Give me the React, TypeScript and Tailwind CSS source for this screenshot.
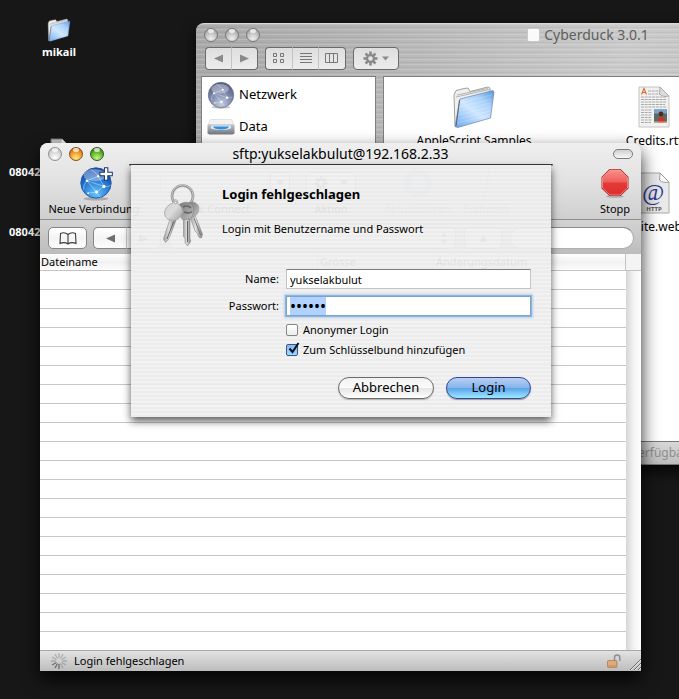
import React, { useEffect, useRef, useState } from "react";
import { clsx } from "clsx";

/* ------------------------------------------------------------------ */
/* Icons                                                               */
/* ------------------------------------------------------------------ */

function FolderIcon({ id, className }: { id: string; className?: string }) {
  return (
    <svg viewBox="0 0 44 44" className={className} aria-hidden="true">
      <defs>
        <linearGradient id={id} x1="0.1" y1="1" x2="0.9" y2="0">
          <stop offset="0" stopColor="#6fb0f5" />
          <stop offset="0.45" stopColor="#cfe6ff" />
          <stop offset="0.75" stopColor="#a8d0fa" />
          <stop offset="1" stopColor="#5f9fe2" />
        </linearGradient>
      </defs>
      <path d="M3 41 L2 10 L4 5.5 L12 3.5 L16 3 L18 6.5 L36 2 L38 3 L38 32 L6 42 Z" fill="#efefef" stroke="#8a8a8a" strokeWidth="0.8" />
      <path d="M4 12 L37 4.5 M5 10 L36 3.5" stroke="#a5a5a5" strokeWidth="0.8" fill="none" />
      <path d="M8 14 L41 5.5 L42 7 L38.5 33 L5.5 42.5 L3 41.5 Z" fill={`url(#${id})`} stroke="#6b86a8" strokeWidth="0.7" />
      <path d="M4 41.5 L7.5 15" stroke="#666" strokeWidth="1" fill="none" />
      <path d="M8 18 L40 10 M7.5 22 L39.5 14 M7 26 L39 18 M6.5 30 L38.5 22 M6 34 L38 26 M5.5 38 L37.5 30" stroke="#fff" strokeOpacity="0.25" strokeWidth="0.8" />
    </svg>
  );
}

function GlobeIcon({ id, gray, plus, className }: { id: string; gray?: boolean; plus?: boolean; className?: string }) {
  return (
    <svg viewBox="0 0 32 32" className={className} aria-hidden="true">
      <defs>
        <radialGradient id={id} cx="0.5" cy="0.85" r="0.85">
          <stop offset="0" stopColor={gray ? "#c5cde0" : "#67c3f7"} />
          <stop offset="0.5" stopColor={gray ? "#7f8bb0" : "#2a7fd6"} />
          <stop offset="1" stopColor={gray ? "#4e587c" : "#0c3f9c"} />
        </radialGradient>
      </defs>
      <ellipse cx="16" cy="30" rx="11" ry="1.6" fill="#000" opacity="0.22" />
      <circle cx="16" cy="16" r={gray ? 14.5 : 13.5} fill={`url(#${id})`} stroke={gray ? "#6b7088" : "#1d54a8"} strokeWidth="0.8" />
      <ellipse cx="15" cy="9" rx="10" ry="5.5" fill="#fff" opacity="0.35" />
      <g stroke="#e8f4ff" strokeWidth="0.5" fill="none" opacity="0.8">
        <path d="M8 14 L18 10 L23 19 L16.5 24 L8 14 M8 14 Q4 18 5 22 M16.5 24 Q19 28 20 29 M23 19 Q27 20 29 18 M18 10 Q15 5 11 4 M9 25 L16.5 24 M8 14 L23 19" />
      </g>
      <g fill="#fff">
        <circle cx="8" cy="14" r="1.2" />
        <circle cx="18" cy="10" r="1.1" />
        <circle cx="23" cy="19" r="1.4" />
        <circle cx="16.5" cy="24" r="1.3" />
        <circle cx="9" cy="25" r="0.8" />
      </g>
      {plus && (
        <path d="M23.5 2.5 h3 v4 h4 v3 h-4 v4 h-3 v-4 h-4 v-3 h4 Z" fill="#fff" stroke="#17376e" strokeWidth="0.9" />
      )}
    </svg>
  );
}

function DriveIcon() {
  return (
    <svg viewBox="0 0 28 18" className="h-[18px] w-7" aria-hidden="true">
      <defs>
        <linearGradient id="driveFront" x1="0" y1="0" x2="0" y2="1">
          <stop offset="0" stopColor="#c2c4c8" />
          <stop offset="1" stopColor="#777a80" />
        </linearGradient>
      </defs>
      <path d="M3.500 1.500 h21 l2.500 5 h-26 Z" fill="#f2f2f2" stroke="#d3d3d3" strokeWidth="0.6" />
      <rect x="0.500" y="6.500" width="27" height="9.500" rx="0.800" fill="url(#driveFront)" />
      <path d="M4 7.500 h20 v3 q-10 3 -20 0 Z" fill="#dbe9f7" />
      <path d="M6 8.500 h16 q-1 3 -8 3 q-7 0 -8 -3" fill="#318fe0" />
      <path d="M2 16.500 h24" stroke="#555" strokeOpacity="0.4" />
    </svg>
  );
}

function GearIcon({ className }: { className?: string }) {
  return (
    <svg viewBox="0 0 16 16" className={className} aria-hidden="true">
      <g fill="currentColor">
        {[0, 45, 90, 135, 180, 225, 270, 315].map((angle) => (
          <rect key={angle} x="6.600" y="0.500" width="2.800" height="4" transform={`rotate(${angle} 8 8)`} />
        ))}
      </g>
      <circle cx="8" cy="8" r="3.700" fill="none" stroke="currentColor" strokeWidth="2.400" />
    </svg>
  );
}

function Triangle({ dir, className }: { dir: "left" | "right" | "up" | "down"; className?: string }) {
  const points = {
    left: "10,0.5 10,9.5 0,5",
    right: "0,0.5 0,9.5 10,5",
    up: "1,9 9,9 5,1",
    down: "0,2 10,2 5,8",
  };
  return (
    <svg viewBox="0 0 10 10" className={className} aria-hidden="true">
      <polygon points={points[dir]} fill="currentColor" />
    </svg>
  );
}

function DocumentIcon() {
  return (
    <svg viewBox="0 0 34 44" className="h-11 w-[34px]" aria-hidden="true">
      <path d="M2 2 H23 L32 11 V42 H2 Z" fill="#f1f1f1" stroke="#c4c4c4" />
      <path d="M4 12 H29 M4 14.500 H29 M4 17 H29 M4 19.500 H28 M4 22 H29 M11 6 H22 M11 9 H23 M4 25 H15 M4 27.500 H15 M4 30 H15 M4 32.500 H14 M4 35 H15 M4 37.500 H14" stroke="#a9a9a9" strokeWidth="1" strokeDasharray="3 0.700" />
      <path d="M4.500 9.500 L7 3.500 L9.500 9.500 M5.500 7.500 H8.500" stroke="#d9692a" strokeWidth="1.100" fill="none" />
      <rect x="17" y="24.500" width="13" height="13" fill="#5c6a63" />
      <rect x="17" y="24.500" width="13" height="4" fill="#7ba3cf" />
      <circle cx="24" cy="29" r="2.400" fill="#4b2d20" />
      <path d="M21 37.500 q0 -6 3 -6 q3.500 0 3.500 6" fill="#c9332c" />
      <path d="M17 37 h13" stroke="#d7b08a" />
      <path d="M23 2 L22.500 9 Q26 12.500 32 11 Z" fill="#dcdcdc" stroke="#9d9d9d" strokeWidth="0.800" />
    </svg>
  );
}

function WeblocIcon() {
  return (
    <svg viewBox="0 0 34 44" className="h-11 w-[34px]" aria-hidden="true">
      <path d="M2 2 H23 L32 11 V42 H2 Z" fill="#e9e9e9" stroke="#a9a9a9" />
      <path d="M23 2 L22.500 9 Q26 12.500 32 11 Z" fill="#fafafa" stroke="#8d8d8d" strokeWidth="0.800" />
      <text x="16" y="28.500" textAnchor="middle" fontFamily="Liberation Serif, serif" fontSize="24" fontStyle="italic" fill="#2b3795">@</text>
      <text x="17" y="39.500" textAnchor="middle" fontFamily="Open Sans, sans-serif" fontSize="6" fontWeight="700" fill="#555">HTTP</text>
    </svg>
  );
}

function KeysIcon() {
  return (
    <svg viewBox="0 0 46 66" className="h-[66px] w-[46px]" aria-hidden="true">
      <defs>
        <linearGradient id="keyDisc" x1="0" y1="0" x2="1" y2="1">
          <stop offset="0" stopColor="#cfcfcf" />
          <stop offset="0.5" stopColor="#dcdcdc" />
          <stop offset="1" stopColor="#9c9c9c" />
        </linearGradient>
        <linearGradient id="keyBlade" x1="0" y1="0" x2="1" y2="0">
          <stop offset="0" stopColor="#a0a0a0" />
          <stop offset="0.45" stopColor="#dedede" />
          <stop offset="1" stopColor="#7d7d7d" />
        </linearGradient>
        <linearGradient id="keyHead" x1="0" y1="0" x2="1" y2="1">
          <stop offset="0" stopColor="#777" />
          <stop offset="0.6" stopColor="#a4a4a4" />
          <stop offset="1" stopColor="#c6c6c6" />
        </linearGradient>
      </defs>
      <circle cx="23.5" cy="15" r="10.500" fill="none" stroke="#949494" strokeWidth="2.600" />
      <circle cx="23.5" cy="14.700" r="10.700" fill="none" stroke="#cfcfcf" strokeWidth="0.900" />
      {/* right key */}
      <path d="M31 36 L36 34 L43.500 53 L42.500 57 L40 56.500 L38 52 L36 50 Z" fill="url(#keyBlade)" stroke="#868686" strokeWidth="0.500" />
      <path d="M35 37 L41.500 54" stroke="#6f6f6f" strokeWidth="0.900" />
      <path d="M29 22 Q36 19 39.500 25 Q41 32 35 36 L31 36 Z" fill="url(#keyHead)" stroke="#9a9a9a" strokeWidth="0.700" />
      {/* middle key */}
      <path d="M24.500 38 h6.500 v20 l0.700 2 l-1 2 l-2.200 3 l-2.500 -3.500 v-4 l-1.500 -2 Z" fill="url(#keyBlade)" stroke="#7c7c7c" strokeWidth="0.500" />
      <path d="M28.500 40 v21" stroke="#606060" strokeWidth="1" />
      <path d="M21 23 Q28 19 33.500 24 Q37 31 31.500 37.500 L24 39 Q18 33 21 23" fill="url(#keyHead)" stroke="#828282" strokeWidth="0.600" />
      <path d="M24 26 q5 -2.500 8 1 M25 31 q5 2 8 -0.500" stroke="#666" strokeWidth="1.600" fill="none" />
      {/* left key */}
      <path d="M11 38 L17 39 L11.500 54 L9 59 L6.500 61.500 L4.500 58 L6 53 Z" fill="url(#keyBlade)" stroke="#7c7c7c" strokeWidth="0.500" />
      <path d="M14.500 41 L8 58" stroke="#606060" strokeWidth="1" />
      <path d="M14 22 Q14 18.500 17 18.500 Q19.500 19.500 19 23 Q24 26 23.500 31 Q21.500 38 15 39.500 Q7 39.500 5.500 33 Q5.500 25 14 22 Z" fill="url(#keyDisc)" stroke="#a5a5a5" strokeWidth="0.800" />
      <circle cx="16.700" cy="21.500" r="1.300" fill="#f5f5f5" stroke="#8d8d8d" strokeWidth="0.700" />
    </svg>
  );
}

function StopIcon() {
  return (
    <svg viewBox="0 0 32 32" className="size-8" aria-hidden="true">
      <defs>
        <linearGradient id="stopRed" x1="0" y1="0" x2="0" y2="1">
          <stop offset="0" stopColor="#f98f8a" />
          <stop offset="0.48" stopColor="#ee5e5a" />
          <stop offset="0.52" stopColor="#e53a37" />
          <stop offset="1" stopColor="#dd2f2d" />
        </linearGradient>
      </defs>
      <ellipse cx="16" cy="29.500" rx="9" ry="1.500" fill="#000" opacity="0.200" />
      <path d="M10.500 2 H21.500 L29.500 10 V21.500 L21.500 29 H10.500 L2.500 21.500 V10 Z" fill="#a62423" />
      <path d="M11 3 H21 L28.500 10.500 V21 L21 28 H11 L3.500 21 V10.500 Z" fill="url(#stopRed)" stroke="#f8aaa6" strokeWidth="0.700" />
    </svg>
  );
}

function BookIcon() {
  return (
    <svg viewBox="0 0 18 13" className="h-[13px] w-[18px]" fill="none" stroke="#3c3c3c" strokeWidth="1.100" aria-hidden="true">
      <path d="M9 2.500 Q5.500 -0.500 1.500 1.500 L1 11.500 Q5.500 9.500 9 12 Q12.500 9.500 17 11.500 L16.500 1.500 Q12.500 -0.500 9 2.500 V12" />
    </svg>
  );
}

function SpinnerIcon() {
  return (
    <svg viewBox="0 0 16 16" className="size-4" aria-hidden="true">
      {Array.from({ length: 12 }, (_, i) => (
        <path
          key={i}
          d="M8 0.500 V4.500"
          stroke="#444"
          strokeWidth="1.300"
          strokeLinecap="round"
          opacity={i >= 6 && i <= 8 ? 0.7 : 0.28}
          transform={`rotate(${i * 30} 8 8)`}
        />
      ))}
    </svg>
  );
}

function PadlockIcon() {
  return (
    <svg viewBox="0 0 14 14" className="size-3.5" aria-hidden="true">
      <path d="M7.500 7 V3.500 Q7.500 1 10 1 Q12.800 1 12.800 3.500 V7" fill="none" stroke="#8f8f8f" strokeWidth="1.500" />
      <rect x="0.500" y="6.500" width="9.500" height="7" rx="1" fill="#d29a67" stroke="#a98361" strokeWidth="0.800" />
      <path d="M1 8 h8 M1 10 h8" stroke="#edc69e" strokeWidth="0.800" />
    </svg>
  );
}

/* ------------------------------------------------------------------ */
/* Shared controls                                                     */
/* ------------------------------------------------------------------ */

function TrafficLights({ active }: { active?: boolean }) {
  const idle = "border-[#777] bg-[radial-gradient(circle_at_50%_80%,#efefef,#b9b9b9_60%,#8d8d8d)]";
  const lights = [
    { label: "Schliessen", color: active ? "border-[#8f8f8f] bg-[radial-gradient(circle_at_50%_80%,#fdfdfd,#d2d2d2_60%,#a5a5a5)]" : idle },
    { label: "Minimieren", color: active ? "border-[#8a4a1c] bg-[radial-gradient(circle_at_50%_85%,#ffe98a,#f0a02c_50%,#b5530c)]" : idle },
    { label: "Zoomen", color: active ? "border-[#2f5c1b] bg-[radial-gradient(circle_at_50%_85%,#c9f58f,#66b82c_50%,#256010)]" : idle },
  ];
  return (
    <div className="flex gap-[7px]">
      {lights.map((light) => (
        <button
          key={light.label}
          aria-label={light.label}
          className={clsx("relative size-3.5 rounded-full border", light.color)}
        >
          <span className="absolute inset-x-[3px] top-0 h-1 rounded-full bg-white/70" />
        </button>
      ))}
    </div>
  );
}

const metalButton =
  "flex h-[23px] items-center justify-center rounded border border-[#6b6b6b] bg-gradient-to-b from-[#dedede] to-[#ececec] text-[#8a8a8a]";
const barButton =
  "flex h-[22px] items-center justify-center rounded-[5px] border border-[#858585] bg-gradient-to-b from-white via-[#f4f4f4] to-[#fdfdfd] text-[#6f6f6f]";

/* ------------------------------------------------------------------ */
/* Finder window                                                       */
/* ------------------------------------------------------------------ */

function FinderWindow() {
  return (
    <section className="absolute left-[196px] top-[23px] flex h-[442px] w-[784px] flex-col rounded-t-lg border-t border-[#d9d9d9] bg-[repeating-linear-gradient(180deg,rgba(255,255,255,0.16)_0_1px,transparent_1px_3px,rgba(0,0,0,0.04)_3px_4px,transparent_4px_5px),linear-gradient(90deg,#a9a9a9,#b4b4b4_20%,#cbcbcb_55%,#b4b4b4)] px-[5px] shadow-[0_6px_14px_rgba(0,0,0,0.8)]">
      <header className="grid h-[22px] grid-cols-[1fr_auto_1fr] items-center px-[3px]">
        <TrafficLights />
        <h2 className="flex items-center gap-1 text-sm text-[#5e5e5e]">
          <span className="h-3.5 w-[13px] rounded-xs border border-[#c9c9c9] bg-[#fafafa]" />
          Cyberduck 3.0.1
        </h2>
      </header>
      <div className="flex h-[30px] items-start gap-[7px] px-1 pt-px">
        <div className="flex">
          <button aria-label="Zurück" className={clsx(metalButton, "w-[27px] rounded-r-none border-r-[#c3c3c3]")}>
            <Triangle dir="left" className="size-[9px]" />
          </button>
          <button aria-label="Vorwärts" className={clsx(metalButton, "w-[26px] rounded-l-none border-l-0")}>
            <Triangle dir="right" className="size-[9px]" />
          </button>
        </div>
        <div className="flex">
          <button aria-label="Symbole" className={clsx(metalButton, "w-7 rounded-r-none border-r-[#c3c3c3]")}>
            <svg viewBox="0 0 12 11" className="h-[11px] w-3" fill="none" stroke="#777" aria-hidden="true">
              <path d="M0.500 0.500 h3 v3 h-3 Z M7.500 0.500 h3 v3 h-3 Z M0.500 6.500 h3 v3 h-3 Z M7.500 6.500 h3 v3 h-3 Z" />
            </svg>
          </button>
          <button aria-label="Liste" className={clsx(metalButton, "w-[25px] rounded-none border-x-0")}>
            <svg viewBox="0 0 12 11" className="h-[11px] w-3" stroke="#777" aria-hidden="true">
              <path d="M0 0.500 H12 M0 3.500 H12 M0 6.500 H12 M0 9.500 H12" />
            </svg>
          </button>
          <button aria-label="Spalten" className={clsx(metalButton, "w-7 rounded-l-none border-l-[#c3c3c3]")}>
            <svg viewBox="0 0 14 11" className="h-[11px] w-3.5" fill="none" stroke="#777" aria-hidden="true">
              <path d="M0.500 0.500 H12.500 V9.500 H0.500 Z M4.500 0.500 V9.500 M8.500 0.500 V9.500" />
            </svg>
          </button>
        </div>
        <button aria-label="Aktion" className={clsx(metalButton, "w-[46px] gap-1")}>
          <GearIcon className="size-[15px]" />
          <Triangle dir="down" className="size-[7px]" />
        </button>
      </div>
      <div className="flex min-h-0 flex-1 gap-[7px]">
        <nav className="w-[175px] border border-[#7f7f7f] bg-white pl-[5px] pt-0.5 text-[13px] text-black">
          <a href="#netzwerk" className="flex h-8 items-center gap-1">
            <GlobeIcon id="netGlobe" gray className="size-7" />
            Netzwerk
          </a>
          <a href="#data" className="flex h-8 items-center gap-1">
            <DriveIcon />
            Data
          </a>
        </nav>
        <div className="flex-1 border-l border-t border-[#7f7f7f] bg-white">
          <ul className="grid grid-cols-[180px_180px] pt-2 text-center text-xs text-black">
            <li className="flex h-[86px] flex-col items-center gap-1">
              <FolderIcon id="folderScripts" className="size-11" />
              AppleScript Samples
            </li>
            <li className="flex h-[86px] flex-col items-center gap-1">
              <DocumentIcon />
              Credits.rtf
            </li>
            <li className="col-start-2 flex h-[86px] flex-col items-center gap-1">
              <WeblocIcon />
              Website.webloc
            </li>
          </ul>
        </div>
      </div>
      <footer className="-mx-[5px] flex h-6 items-center border-b border-t border-[#777] bg-gradient-to-b from-[#d8d8d8] to-[#bdbdbd] pl-[436px] text-xs text-[#8e8e8e]">
        verfügbar
      </footer>
    </section>
  );
}

/* ------------------------------------------------------------------ */
/* Login sheet                                                         */
/* ------------------------------------------------------------------ */

function CheckBox({ id, label, checked, onChange }: { id: string; label: string; checked: boolean; onChange: (v: boolean) => void }) {
  return (
    <div className="flex h-5 items-center gap-[5px]">
      <span className="relative size-3">
        <input
          id={id}
          type="checkbox"
          checked={checked}
          onChange={(e) => onChange(e.target.checked)}
          className="block size-3 appearance-none rounded-xs border border-[#858585] bg-gradient-to-b from-white to-[#ededed] checked:border-[#3b548e] checked:from-[#8fb4ee] checked:to-[#8fe0ff]"
        />
        {checked && (
          <svg viewBox="0 0 14 14" className="pointer-events-none absolute -right-0.5 -top-0.5 size-3.5" fill="none" aria-hidden="true">
            <path d="M3.500 6.500 L6.500 10 L12.500 1" stroke="#0a0f24" strokeWidth="2" />
          </svg>
        )}
      </span>
      <label htmlFor={id}>{label}</label>
    </div>
  );
}

function LoginSheet() {
  const [name, setName] = useState("yukselakbulut");
  const [password, setPassword] = useState("geheim");
  const [anonymous, setAnonymous] = useState(false);
  const [keychain, setKeychain] = useState(true);
  const passwordRef = useRef<HTMLInputElement>(null);

  useEffect(() => {
    passwordRef.current?.focus();
    passwordRef.current?.select();
  }, []);

  return (
    <div className="absolute left-[89px] right-[88px] top-[21px] px-0.5">
      {/* slot the sheet slides out of */}
      <div className="-mx-0.5 h-0.5 rounded-full border-t border-[#3c3c3c] bg-[#8f8f8f]" />
      <form
        role="dialog"
        aria-labelledby="login-title"
        onSubmit={(e) => e.preventDefault()}
        className="-mt-px bg-[repeating-linear-gradient(180deg,rgba(241,241,241,0.94)_0_2px,rgba(235,235,235,0.94)_2px_4px)] pb-[18px] pl-7 pr-5 pt-4 text-[11px] text-black shadow-[0_4px_8px_rgba(0,0,0,0.65)]"
      >
        <div className="flex gap-[17px]">
          <KeysIcon />
          <div>
            <h1 id="login-title" className="mt-[3px] text-[13px] font-bold leading-5">Login fehlgeschlagen</h1>
            <p className="mt-[15px] leading-5">Login mit Benutzername und Passwort</p>
          </div>
        </div>
        <div className="mt-[22px] grid grid-cols-[120px_1fr] items-center gap-x-[7px] gap-y-[7px]">
          <label htmlFor="name" className="text-right">Name:</label>
          <input
            id="name"
            value={name}
            onChange={(e) => setName(e.target.value)}
            className="h-5 w-full min-w-0 border border-[#c4c4c4] border-t-[#7e7e7e] bg-white px-[3px] outline-none"
          />
          <label htmlFor="password" className="text-right">Passwort:</label>
          <input
            id="password"
            ref={passwordRef}
            type="password"
            value={password}
            onChange={(e) => setPassword(e.target.value)}
            className="h-5 w-full min-w-0 border border-[#7ba3cf] bg-white px-[3px] text-base leading-4 shadow-[0_0_0_1px_#8fb5dc,0_0_2px_2px_#b4cfe9] outline-none selection:bg-[#b1d2ff] selection:text-black"
          />
        </div>
        <div className="ml-[127px] mt-1">
          <CheckBox id="anonymous" label="Anonymer Login" checked={anonymous} onChange={setAnonymous} />
          <CheckBox id="keychain" label="Zum Schlüsselbund hinzufügen" checked={keychain} onChange={setKeychain} />
        </div>
        <div className="mt-[17px] flex justify-end gap-3 text-[13px]">
          <button
            type="button"
            className="flex h-[22px] w-24 items-center justify-center rounded-full border border-[#6b6b6b] bg-[linear-gradient(180deg,#f2f2f2,#fbfbfb_48%,#e6e6e6_52%,#fff)] shadow-[0_1px_1px_rgba(0,0,0,0.25)]"
          >
            Abbrechen
          </button>
          <button
            type="submit"
            className="flex h-[22px] w-[85px] items-center justify-center rounded-full border border-[#34469a] bg-[linear-gradient(180deg,#b9cff2,#86b4ec_48%,#5da3ea_52%,#9beaff)] shadow-[0_1px_1px_rgba(0,0,0,0.35)]"
          >
            Login
          </button>
        </div>
      </form>
    </div>
  );
}

/* ------------------------------------------------------------------ */
/* Browser window                                                      */
/* ------------------------------------------------------------------ */

function Toolbar() {
  return (
    <div className="flex h-[54px] items-start pl-2 pr-2.5 text-[11px] leading-4 text-black">
      <button className="flex w-[92px] flex-col items-center whitespace-nowrap">
        <GlobeIcon id="newGlobe" plus className="ml-1 size-9" />
        Neue Verbindung
      </button>
      <div className="ml-5 flex w-[130px] flex-col items-center">
        <div className="flex h-9 w-full items-center">
          <input aria-label="Quick Connect" className="h-[22px] w-full min-w-0 border border-[#ccc] bg-[#ededed]" />
          <button aria-label="Verlauf" className={clsx(barButton, "w-5 shrink-0")}>
            <Triangle dir="down" className="size-2" />
          </button>
        </div>
        <span className="self-end pr-10">Quick Connect</span>
      </div>
      <button className="ml-4 flex w-[50px] flex-col items-center">
        <span className="flex h-9 items-center">
          <span className={clsx(barButton, "w-[50px] gap-3")}>
            <GearIcon className="size-3.5" />
            <Triangle dir="down" className="size-2" />
          </span>
        </span>
        Aktion
      </button>
      <button disabled className="ml-7 flex flex-col items-center opacity-40">
        <svg viewBox="0 0 36 36" className="size-9" fill="none" aria-hidden="true">
          <circle cx="18" cy="18" r="11" stroke="#3d7fd0" strokeWidth="7" />
        </svg>
        Aktualisieren
      </button>
      <button disabled className="ml-3 flex flex-col items-center opacity-40">
        <svg viewBox="0 0 36 36" className="size-9" aria-hidden="true">
          <path d="M22 3 L17 28 L15 33" stroke="#e0a526" strokeWidth="3" fill="none" />
        </svg>
        Editieren
      </button>
      <button className="ml-auto flex flex-col items-center">
        <span className="flex h-9 items-center">
          <StopIcon />
        </span>
        Stopp
      </button>
    </div>
  );
}

function PathBar() {
  return (
    <div className="flex h-[35px] items-center border-t border-[#8f8f8f] bg-gradient-to-b from-[#d3d3d3] to-[#bcbcbc] pl-2 pr-[7px] pt-0.5">
      <button aria-label="Lesezeichen" className={clsx(barButton, "w-[39px]")}>
        <BookIcon />
      </button>
      <div className="ml-1.5 flex">
        <button aria-label="Zurück" className={clsx(barButton, "w-[34px] rounded-r-none border-r-[#c9c9c9]")}>
          <Triangle dir="left" className="size-[9px]" />
        </button>
        <button aria-label="Vorwärts" className={clsx(barButton, "w-[34px] rounded-l-none border-l-0")}>
          <Triangle dir="right" className="size-[9px]" />
        </button>
      </div>
      <button aria-label="Pfad" className={clsx(barButton, "ml-2 min-w-0 flex-1 justify-end pr-2")}>
        <span className="flex flex-col gap-0.5">
          <Triangle dir="up" className="size-1.5" />
          <Triangle dir="down" className="size-1.5" />
        </span>
      </button>
      <button aria-label="Übergeordneter Ordner" className={clsx(barButton, "ml-2 w-[38px]")}>
        <Triangle dir="up" className="size-[9px]" />
      </button>
      <input
        type="search"
        aria-label="Suchen"
        className="ml-2 h-[22px] w-[124px] rounded-full border border-[#b0b0b0] border-t-[#8a8a8a] bg-white px-3 text-[11px] outline-none"
      />
    </div>
  );
}

function FileTable() {
  return (
    <div className="flex min-h-0 flex-1 overflow-hidden bg-white">
      <table className="h-fit w-full flex-1 table-fixed border-separate border-spacing-0 text-left text-[11px] leading-4 text-black">
        <thead>
          <tr className="bg-gradient-to-b from-white via-[#f1f1f1] to-white">
            <th className="h-[17px] w-[278px] border-b border-r border-[#c3c3c3] p-0 pl-px font-normal">Dateiname</th>
            <th className="w-[116px] border-b border-r border-[#c3c3c3] p-0 pl-0.5 font-normal">Grösse</th>
            <th className="border-b border-r border-[#c3c3c3] p-0 pl-0.5 font-normal">Änderungsdatum</th>
          </tr>
        </thead>
        <tbody>
          {Array.from({ length: 20 }, (_, row) => (
            <tr key={row}>
              <td colSpan={3} className="h-[19px] border-b border-[#c6c6c6] p-0" />
            </tr>
          ))}
        </tbody>
      </table>
      <div className="flex w-[15px] flex-col">
        <div className="h-[17px] border-b border-[#c3c3c3] bg-[#f4f4f4]" />
        <div className="flex-1 bg-gradient-to-r from-[#d6d6d6] via-[#f3f3f3] to-white" />
      </div>
    </div>
  );
}

function BrowserWindow() {
  return (
    <section className="absolute bottom-7 left-10 right-[38px] top-[143px] flex flex-col rounded-t-lg bg-[#cfcfcf] shadow-[0_8px_18px_rgba(0,0,0,0.85)]">
      <div className="rounded-t-lg bg-gradient-to-b from-[#efefef] via-[#e2e2e2] to-[#cfcfcf]">
        <header className="grid h-[22px] grid-cols-[1fr_auto_1fr] items-center px-2">
          <TrafficLights active />
          <h2 className="text-sm text-black">sftp:yukselakbulut@192.168.2.33</h2>
          <button
            aria-label="Symbolleiste"
            className="h-2.5 w-5 justify-self-end rounded-full border border-[#7b7b7b] bg-gradient-to-b from-[#d0d0d0] to-[#f8f8f8]"
          />
        </header>
        <Toolbar />
      </div>
      <PathBar />
      <FileTable />
      <footer className="flex h-[21px] shrink-0 items-center border-t border-[#a9a9a9] bg-gradient-to-b from-[#e2e2e2] to-[#bdbdbd] pl-[11px] text-[11px] text-black">
        <SpinnerIcon />
        <span className="ml-[7px] flex-1">Login fehlgeschlagen</span>
        <PadlockIcon />
        <svg viewBox="0 0 12 12" className="ml-2 mt-1.5 size-3" aria-hidden="true">
          <path d="M1 12 L12 1 M5 12 L12 5 M9 12 L12 9" stroke="#6f6f6f" />
          <path d="M2 12 L12 2 M6 12 L12 6 M10 12 L12 10" stroke="#fff" strokeOpacity="0.600" />
        </svg>
      </footer>
      <LoginSheet />
    </section>
  );
}

/* ------------------------------------------------------------------ */
/* Desktop                                                             */
/* ------------------------------------------------------------------ */

export default function App() {
  return (
    <main className="relative h-screen overflow-hidden bg-[#171717] font-['Noto_Sans','Open_Sans',sans-serif]">
      <ul className="flex w-[118px] flex-col items-center pt-[18px] text-[11px] font-bold leading-4 text-white">
        <li className="flex flex-col items-center gap-0.5">
          <FolderIcon id="folderHome" className="size-6" />
          mikail
        </li>
        <li className="mt-[78px] flex w-full flex-col items-center gap-1">
          <svg viewBox="0 0 18 22" className="h-[22px] w-[18px]" aria-hidden="true">
            <path d="M1 1 H12 L17 6 V21 H1 Z" fill="#c5c5c5" stroke="#777" />
            <path d="M12 1 L11.500 5 L17 6 Z" fill="#f2f2f2" />
          </svg>
          <span className="w-full pl-[9px]">080427</span>
        </li>
        <li className="mt-11 w-full pl-[9px]">080427</li>
      </ul>
      <FinderWindow />
      <BrowserWindow />
    </main>
  );
}
